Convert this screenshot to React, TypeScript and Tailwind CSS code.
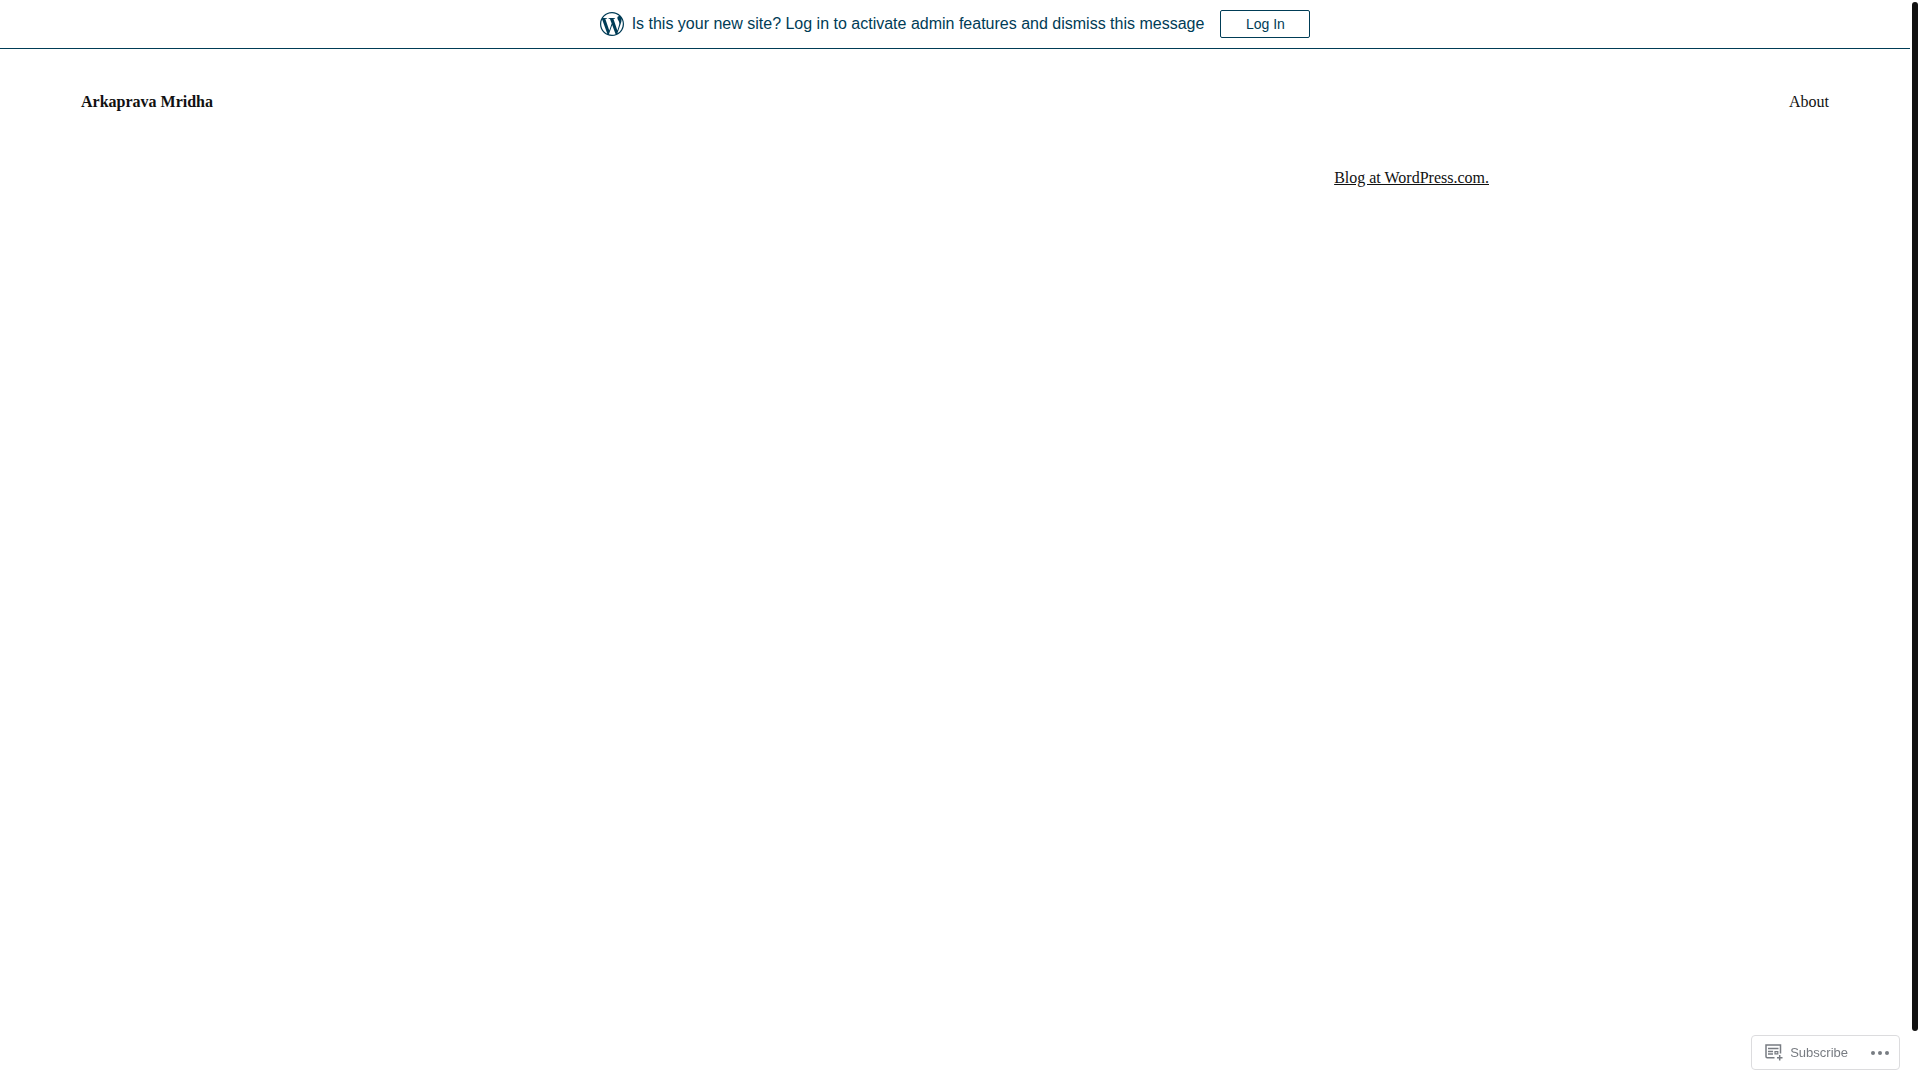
import React from "react";
import { SiWordpress } from "react-icons/si";

const SubscribeIcon: React.FC = () => (
  <svg
    className="h-[17px] w-[18px] shrink-0"
    viewBox="0 0 18 17"
    fill="none"
    stroke="currentColor"
    aria-hidden="true"
  >
    <path d="M9.5 13.8H2.2a1.2 1.2 0 0 1-1.2-1.2V1h14.5v8.5" strokeWidth="1.5" />
    <path d="M3 4.5h10.5M3 7.5h5M3 10h5" strokeWidth="1.3" />
    <path d="M10 7.6h2.8v2.3H10z" strokeWidth="1.2" />
    <path d="M14.7 11v5.5M12 13.8h5.5" strokeWidth="1.5" />
  </svg>
);

const LoginBanner: React.FC = () => (
  <div className="flex h-[49px] items-center justify-center border-b border-[#003c56] pb-px font-['Liberation_Sans',Arial,sans-serif] text-[#003c56]">
    <SiWordpress className="mr-2 h-6 w-6 shrink-0" aria-hidden="true" />
    <p className="text-base">
      Is this your new site? Log in to activate admin features and dismiss this
      message
    </p>
    <a
      href="#login"
      className="ml-4 flex h-7 w-[90px] shrink-0 items-center justify-center rounded-xs border border-[#003c56] text-sm"
    >
      Log In
    </a>
  </div>
);

const ActionBar: React.FC = () => (
  <div className="fixed right-5 bottom-[10px] flex h-[35px] items-center rounded-sm border border-[#dcdcde] bg-white font-['Liberation_Sans',Arial,sans-serif] text-[13px] text-[#787c82]">
    <button type="button" className="flex h-full items-center gap-[7px] pl-[13px]">
      <SubscribeIcon />
      Subscribe
    </button>
    <button
      type="button"
      aria-label="More options"
      className="flex h-full items-center pr-[10px] pl-[23px]"
    >
      <svg className="h-1 w-[18px]" viewBox="0 0 18 4" fill="currentColor">
        <circle cx="2" cy="2" r="2" />
        <circle cx="9" cy="2" r="2" />
        <circle cx="16" cy="2" r="2" />
      </svg>
    </button>
  </div>
);

const App: React.FC = () => {
  return (
    <div className="min-h-screen bg-white pr-[10px] font-['Liberation_Serif','Times_New_Roman',serif] text-base text-[#111111]">
      <LoginBanner />

      <header className="flex items-center justify-between px-[81px] pt-[41px]">
        <a href="#home" className="font-bold">
          Arkaprava Mridha
        </a>
        <nav>
          <a href="#about">About</a>
        </nav>
      </header>

      <footer className="mx-auto flex max-w-[1068px] justify-end pt-[52px]">
        <a href="#wordpress" className="underline">
          Blog at WordPress.com.
        </a>
      </footer>

      {/* Scroll thumb */}
      <div className="fixed top-0.5 right-0.5 bottom-[49px] w-1.5 rounded-full bg-[#111111]" />

      <ActionBar />
    </div>
  );
};

export default App;
